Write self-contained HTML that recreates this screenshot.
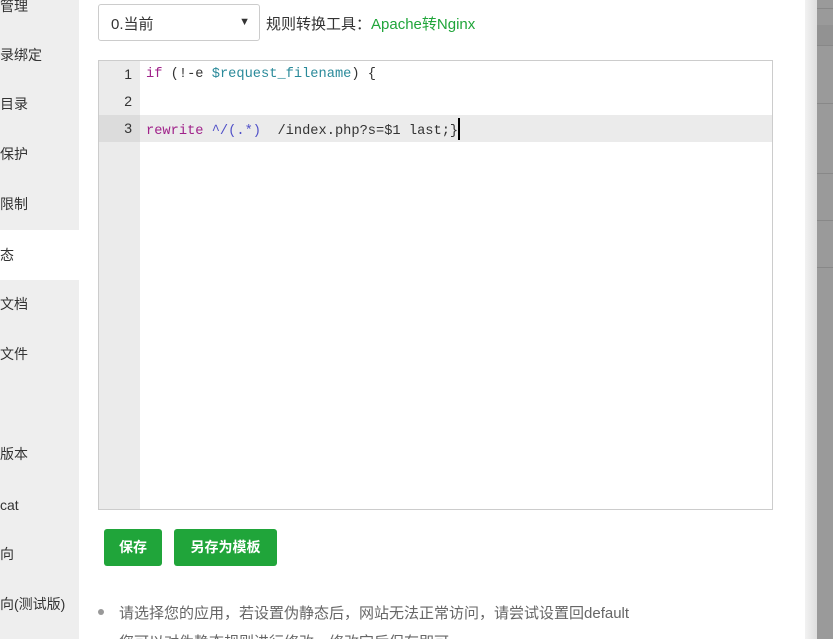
<!DOCTYPE html>
<html><head><meta charset="utf-8"><style>
html,body{margin:0;width:833px;height:639px;overflow:hidden}
body{background:#fff;font-family:"Liberation Sans","Noto Sans CJK SC",sans-serif;position:relative;font-size:14px;color:#333}
.side{position:absolute;left:0;top:0;width:79px;height:639px;background:#eee}
.side div{position:absolute;left:0;width:79px;height:50px;line-height:50px;font-size:14px;color:#333}
.r{position:absolute;left:805px;top:0;width:12px;height:639px;background:linear-gradient(90deg,#f2f2f2,#dedede)}
.g{position:absolute;left:817px;top:0;width:16px;height:639px;background:#9a9a9a}
.g i{position:absolute;left:0;width:16px;height:1px;background:#888}
.sel{position:absolute;left:98px;top:4px;border:1px solid #ccc;border-radius:3px;box-sizing:border-box;width:162px;height:37px}
.sel span{position:absolute;left:12px;top:8px;font-size:15px}
.sel b{position:absolute;right:9px;top:11px;font-size:11px;font-weight:normal}
.ed{position:absolute;left:98px;top:60px;width:675px;height:450px;border:1px solid #ccc;box-sizing:border-box}
.gut{position:absolute;left:0;top:0;width:41px;height:448px;background:#ebebeb}
.ln{position:absolute;width:33px;text-align:right;font-family:"Liberation Sans",sans-serif;font-size:14px;color:#333}
.code{position:absolute;left:47px;font-family:"Liberation Mono","DejaVu Sans Mono",monospace;font-size:13.7px;white-space:pre;color:#333}
.btn{position:absolute;top:529px;height:37px;line-height:37px;background:#20a53a;color:#fff;border-radius:3px;text-align:center;font-size:14px;font-weight:bold}
</style></head><body>
<div class="side">
<div style="top:-19px">管理</div>
<div style="top:30px">录绑定</div>
<div style="top:79px">目录</div>
<div style="top:129px">保护</div>
<div style="top:179px">限制</div>
<div style="top:230px;background:#fff">态</div>
<div style="top:279px">文档</div>
<div style="top:329px">文件</div>
<div style="top:429px">版本</div>
<div style="top:480px">cat</div>
<div style="top:529px">向</div>
<div style="top:579px">向(测试版)</div>
</div>
<div class="r"></div>
<div class="g"><i style="top:8px"></i><i style="top:25px;height:20px;background:#929292"></i><i style="top:45px"></i><i style="top:103px"></i><i style="top:173px"></i><i style="top:220px"></i><i style="top:267px"></i></div>
<div class="sel"><span>0.当前</span><b>▼</b></div>
<div style="position:absolute;left:266px;top:13px;font-size:15px">规则转换工具：<span style="color:#20a53a">Apache转Nginx</span></div>
<div class="ed">
<div class="gut"></div>
<div style="position:absolute;left:0;top:54px;width:673px;height:27px;background:#ebebeb"></div>
<div style="position:absolute;left:0;top:54px;width:41px;height:27px;background:#dcdcdc"></div>
<div class="ln" style="top:5px">1</div>
<div class="ln" style="top:32px">2</div>
<div class="ln" style="top:59px">3</div>
<div class="code" style="top:6px"><span style="color:#a0228a">if</span> (!-e <span style="color:#2a8a9a">$request_filename</span>) {</div>
<div class="code" style="top:57px"><span style="color:#a0228a">rewrite</span> <span style="color:#5050c8">^/(.*)</span>  /index.php?s=$1 last;}<span style="display:inline-block;width:2px;height:22px;background:#000;vertical-align:-6px"></span></div>
</div>
<div class="btn" style="left:104px;width:58px">保存</div>
<div class="btn" style="left:174px;width:103px">另存为模板</div>
<div style="position:absolute;left:98px;top:609px;width:6px;height:6px;border-radius:3px;background:#999"></div>
<div style="position:absolute;left:119px;top:602px;color:#666;font-size:15px">请选择您的应用，若设置伪静态后，网站无法正常访问，请尝试设置回default</div>
<div style="position:absolute;left:119px;top:631px;color:#666;font-size:15px">您可以对伪静态规则进行修改，修改完后保存即可。</div>
</body></html>
